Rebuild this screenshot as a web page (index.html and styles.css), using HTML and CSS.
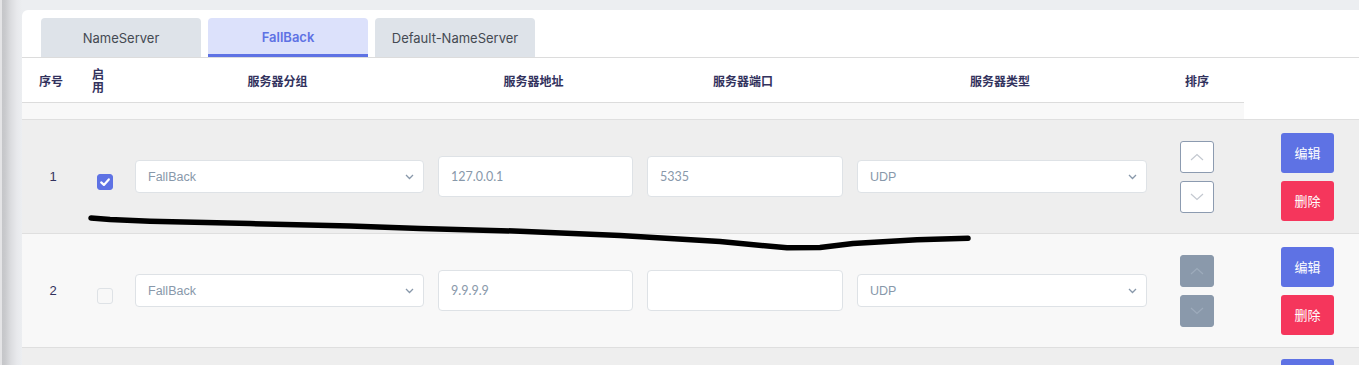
FILE: index.html
```html
<!DOCTYPE html>
<html lang="zh-CN">
<head>
<meta charset="utf-8">
<title>DNS Servers</title>
<link rel="stylesheet" href="styles.css">
</head>
<body>
<div class="page">
  <div class="edge"></div>
  <div class="card">
    <div class="tabs">
      <div class="tab">NameServer</div>
      <div class="tab active">FallBack</div>
      <div class="tab">Default-NameServer</div>
    </div>
    <div class="table">
      <div class="thead">
        <div class="th">序号</div>
        <div class="th th-narrow"><span>启用</span></div>
        <div class="th">服务器分组</div>
        <div class="th">服务器地址</div>
        <div class="th">服务器端口</div>
        <div class="th">服务器类型</div>
        <div class="th">排序</div>
      </div>
      <div class="spacer-row"></div>

      <div class="row row-dark">
        <div class="cell cell-num">1</div>
        <div class="cell cell-check">
          <span class="checkbox checked"><svg width="16" height="16" viewBox="0 0 16 16"><path d="M4.2 8.4 L6.9 10.9 L11.8 5.4" fill="none" stroke="#fff" stroke-width="2.2" stroke-linecap="round" stroke-linejoin="round"/></svg></span>
        </div>
        <div class="cell"><div class="select"><span>FallBack</span><svg class="caret" width="9" height="6" viewBox="0 0 9 6"><path d="M1 1 L4.5 4.5 L8 1" fill="none" stroke="#8898aa" stroke-width="1.3"/></svg></div></div>
        <div class="cell"><input class="field" type="text" value="127.0.0.1"></div>
        <div class="cell"><input class="field" type="text" value="5335"></div>
        <div class="cell"><div class="select"><span>UDP</span><svg class="caret" width="9" height="6" viewBox="0 0 9 6"><path d="M1 1 L4.5 4.5 L8 1" fill="none" stroke="#8898aa" stroke-width="1.3"/></svg></div></div>
        <div class="cell cell-sort">
          <button class="sort-btn"><svg width="14" height="8" viewBox="0 0 14 8"><path d="M1 7 L7 1.5 L13 7" fill="none" stroke="#c3c8d0" stroke-width="1.2"/></svg></button>
          <button class="sort-btn"><svg width="14" height="8" viewBox="0 0 14 8"><path d="M1 1 L7 6.5 L13 1" fill="none" stroke="#c3c8d0" stroke-width="1.2"/></svg></button>
        </div>
        <div class="cell cell-actions">
          <button class="btn btn-edit">编辑</button>
          <button class="btn btn-delete">删除</button>
        </div>
      </div>

      <div class="row row-light">
        <div class="cell cell-num">2</div>
        <div class="cell cell-check"><span class="checkbox"></span></div>
        <div class="cell"><div class="select"><span>FallBack</span><svg class="caret" width="9" height="6" viewBox="0 0 9 6"><path d="M1 1 L4.5 4.5 L8 1" fill="none" stroke="#8898aa" stroke-width="1.3"/></svg></div></div>
        <div class="cell"><input class="field" type="text" value="9.9.9.9"></div>
        <div class="cell"><input class="field" type="text" value=""></div>
        <div class="cell"><div class="select"><span>UDP</span><svg class="caret" width="9" height="6" viewBox="0 0 9 6"><path d="M1 1 L4.5 4.5 L8 1" fill="none" stroke="#8898aa" stroke-width="1.3"/></svg></div></div>
        <div class="cell cell-sort">
          <button class="sort-btn disabled"><svg width="14" height="8" viewBox="0 0 14 8"><path d="M1 7 L7 1.5 L13 7" fill="none" stroke="#9dabbb" stroke-width="1.2"/></svg></button>
          <button class="sort-btn disabled"><svg width="14" height="8" viewBox="0 0 14 8"><path d="M1 1 L7 6.5 L13 1" fill="none" stroke="#9dabbb" stroke-width="1.2"/></svg></button>
        </div>
        <div class="cell cell-actions">
          <button class="btn btn-edit">编辑</button>
          <button class="btn btn-delete">删除</button>
        </div>
      </div>

      <div class="row row-dark row-peek">
        <div class="cell cell-num"></div>
        <div class="cell cell-check"></div>
        <div class="cell"></div>
        <div class="cell"></div>
        <div class="cell"></div>
        <div class="cell"></div>
        <div class="cell cell-sort"></div>
        <div class="cell cell-actions">
          <button class="btn btn-edit" aria-label="编辑"></button>
        </div>
      </div>
    </div>
  </div>
  <svg class="scribble" width="1359" height="365" viewBox="0 0 1359 365">
    <path d="M91 218 L110 219.6 L150 221.2 L250 223.6 L350 226 L420 228.4 L520 231.2 L620 235.4 L720 241.6 L787 247.8 L820 247.4 L853 243.6 L917 239.8 L968 238.3" fill="none" stroke="#000" stroke-width="5.5" stroke-linecap="round" stroke-linejoin="round"/>
  </svg>
</div>
</body>
</html>
```

FILE: styles.css
```css
* { box-sizing: border-box; }

html, body {
  margin: 0;
  padding: 0;
}

body {
  width: 1359px;
  height: 365px;
  overflow: hidden;
  background: #eceef1;
  font-family: "Liberation Sans", Arial, "Noto Sans CJK SC", sans-serif;
}

.page {
  position: relative;
  display: flex;
  height: 365px;
  overflow: hidden;
}

.edge {
  flex: 0 0 22px;
  height: 100%;
  background: linear-gradient(to right, #e4e4e6 0, #e4e4e6 2px, #c5c6c9 2px, #c9cacd 5px, #dcdde0 11px, #e8e9ec 17px, #eceef1 22px);
}

.card {
  flex: 0 0 1400px;
  margin-top: 10px;
  background: #fff;
  border-top-left-radius: 6px;
  padding-top: 8px;
}

.tabs {
  display: flex;
  gap: 7px;
  padding-left: 19px;
  border-bottom: 1px solid #dcdcdc;
}

.tab {
  width: 160px;
  height: 39px;
  display: flex;
  align-items: center;
  justify-content: center;
  background: #dee3e9;
  border-radius: 4px 4px 0 0;
  font-family: Inter, "Liberation Sans", sans-serif;
  font-size: 13px;
  color: #444a52;
  padding-top: 1px;
}

.tab.active {
  background: #dce1fb;
  color: #5e72e4;
  font-weight: 600;
  border-bottom: 3px solid #5e72e4;
  padding-top: 2px;
}

.thead {
  width: 1222px;
  height: 45px;
  display: grid;
  grid-template-columns: 62px 44px 303px 209px 210px 304px 90px;
  border-bottom: 1px solid #dcdcdc;
}

.th {
  display: flex;
  align-items: center;
  justify-content: center;
  font-family: "Noto Sans CJK SC", sans-serif;
  font-size: 12px;
  font-weight: 700;
  color: #32325d;
  padding-right: 4px;
}

.th-narrow {
  justify-content: flex-start;
  padding-left: 8px;
}

.th-narrow span {
  display: block;
  width: 13px;
  line-height: 13.5px;
}

.spacer-row {
  width: 1222px;
  height: 16px;
  background: #f8f8f8;
}

.row {
  display: grid;
  grid-template-columns: 62px 44px 303px 209px 210px 304px 90px 127px;
  height: 114px;
  border-top: 1px solid #dfdfdf;
}

.row-dark { background: #eeeeee; }
.row-light { background: #f8f8f8; }

.cell {
  display: flex;
  align-items: center;
  padding: 0 7px;
  min-width: 0;
}

.row-peek .cell-actions {
  justify-content: flex-start;
  padding-top: 11px;
}

.cell-num {
  justify-content: center;
  font-size: 13px;
  color: #32325d;
}

.cell-check {
  justify-content: center;
  padding: 0;
}

.checkbox {
  display: block;
  width: 16px;
  height: 16px;
  margin-top: 11px;
  margin-left: -2px;
  border: 1px solid #dee2e6;
  border-radius: 3px;
  background: #f8f8f8;
}

.checkbox.checked {
  background: #5e72e4;
  border-color: #5e72e4;
}

.checkbox svg {
  display: block;
  margin: -1px 0 0 -1px;
}

.select {
  width: 100%;
  height: 33px;
  display: flex;
  align-items: center;
  justify-content: space-between;
  background: #fff;
  border: 1px solid #dee2e6;
  border-radius: 4px;
  padding: 0 9px 0 12px;
  font-family: "Liberation Sans", Arial, sans-serif;
  font-size: 12.5px;
  color: #8898aa;
}

.caret { display: block; margin-top: 1px; }

.field {
  width: 100%;
  height: 41px;
  margin: 0;
  background: #fff;
  border: 1px solid #dee2e6;
  border-radius: 4px;
  padding: 0 12px;
  font-family: Lato, "Open Sans", sans-serif;
  font-size: 12.5px;
  color: #8898aa;
  outline: none;
}

.cell-sort {
  flex-direction: column;
  justify-content: center;
  gap: 8px;
  padding: 0 0 0 26px;
  align-items: flex-start;
}

.sort-btn {
  width: 34px;
  height: 32px;
  margin: 0;
  padding: 0;
  display: flex;
  align-items: center;
  justify-content: center;
  background: #fff;
  border: 1px solid #8c9bb0;
  border-radius: 3px;
}

.sort-btn.disabled {
  background: #8a99ab;
  border-color: #8a99ab;
}

.cell-actions {
  flex-direction: column;
  justify-content: center;
  align-items: flex-start;
  gap: 8px;
  padding: 0 0 0 37px;
}

.btn {
  width: 53px;
  height: 40px;
  margin: 0;
  padding: 0;
  border: none;
  border-radius: 3px;
  font-family: "Noto Sans CJK SC", sans-serif;
  font-size: 13px;
  color: #fff;
}

.btn-edit { background: #5e72e4; }
.btn-delete { background: #f5365c; }

.scribble {
  position: absolute;
  top: 0;
  left: 0;
  pointer-events: none;
}
```
